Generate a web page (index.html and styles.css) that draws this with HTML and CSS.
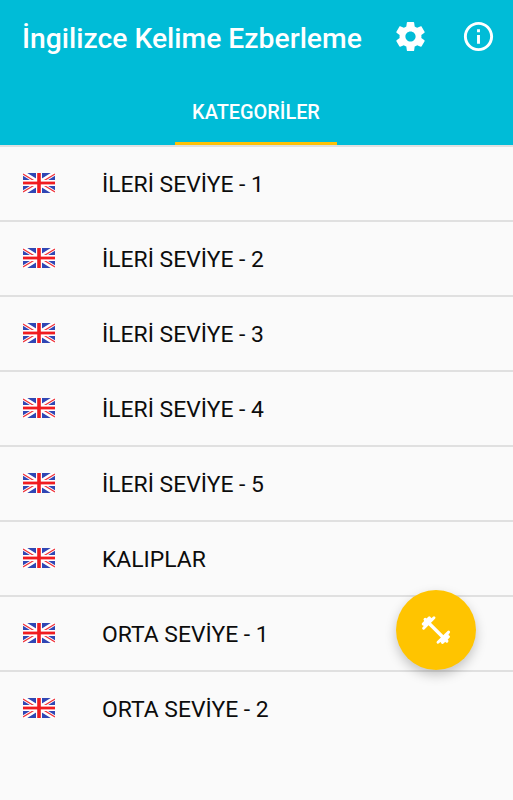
FILE: index.html
```html
<!DOCTYPE html>
<html lang="tr">
<head>
    <meta charset="UTF-8">
    <meta name="viewport" content="width=device-width, initial-scale=1.0">
    <title>İngilizce Kelime Ezberleme</title>
    <link rel="stylesheet" href="styles.css">
</head>
<body>
    <svg width="0" height="0" class="symbols">
        <symbol id="flag" viewBox="0 0 32 20">
            <rect width="32" height="20" fill="#3046b4"/>
            <path d="M0 0L32 20M32 0L0 20" stroke="#fff" stroke-width="4.500"/>
            <path d="M0 1L14 9.500M32 1L18 9.500M0 19L14 10.500M32 19L18 10.500" stroke="#f03038" stroke-width="1.300"/>
            <path d="M16 0V20M0 10H32" stroke="#fff" stroke-width="6"/>
            <path d="M16 0V20" stroke="#f01c20" stroke-width="3.600"/>
            <path d="M0 10H32" stroke="#f01c20" stroke-width="2.800"/>
        </symbol>
    </svg>

    <header class="app-header">
        <div class="toolbar">
            <h1>İngilizce Kelime Ezberleme</h1>
            <button class="icon-button" aria-label="Ayarlar">
                <svg viewBox="0 0 24 24"><path d="M19.43 12.98c.04-.32.07-.64.07-.98s-.03-.66-.07-.98l2.110-1.650c.19-.15.24-.42.12-.64l-2-3.460c-.12-.22-.39-.3-.61-.22l-2.490 1c-.52-.4-1.080-.73-1.690-.98l-.38-2.650C14.460 2.180 14.250 2 14 2h-4c-.25 0-.46.18-.49.42l-.38 2.650c-.61.25-1.170.59-1.690.98l-2.490-1c-.23-.09-.49 0-.61.22l-2 3.460c-.13.22-.07.49.12.64l2.110 1.650c-.04.32-.07.65-.07.98s.03.66.07.98l-2.110 1.650c-.19.15-.24.42-.12.64l2 3.460c.12.22.39.3.61.22l2.490-1c.52.4 1.080.73 1.690.98l.38 2.650c.03.24.24.42.49.42h4c.25 0 .46-.18.49-.42l.38-2.650c.61-.25 1.170-.59 1.690-.98l2.490 1c.23.09.49 0 .61-.22l2-3.460c.12-.22.07-.49-.12-.64l-2.110-1.650zM12 15.500c-1.930 0-3.500-1.570-3.500-3.500s1.570-3.500 3.500-3.500 3.500 1.570 3.500 3.500-1.570 3.500-3.500 3.500z"/></svg>
            </button>
            <button class="icon-button" aria-label="Hakkında">
                <svg viewBox="0 0 24 24"><path d="M11 17h2v-6h-2v6zm1-15C6.480 2 2 6.480 2 12s4.480 10 10 10 10-4.480 10-10S17.520 2 12 2zm0 18c-4.410 0-8-3.590-8-8s3.590-8 8-8 8 3.590 8 8-3.590 8-8 8zM11 9h2V7h-2v2z"/></svg>
            </button>
        </div>
        <nav class="tabs">
            <a class="tab active">KATEGORİLER</a>
        </nav>
    </header>

    <ul class="category-list">
        <li><svg class="flag"><use href="#flag"/></svg><span>İLERİ SEVİYE - 1</span></li>
        <li><svg class="flag"><use href="#flag"/></svg><span>İLERİ SEVİYE - 2</span></li>
        <li><svg class="flag"><use href="#flag"/></svg><span>İLERİ SEVİYE - 3</span></li>
        <li><svg class="flag"><use href="#flag"/></svg><span>İLERİ SEVİYE - 4</span></li>
        <li><svg class="flag"><use href="#flag"/></svg><span>İLERİ SEVİYE - 5</span></li>
        <li><svg class="flag"><use href="#flag"/></svg><span>KALIPLAR</span></li>
        <li><svg class="flag"><use href="#flag"/></svg><span>ORTA SEVİYE - 1</span></li>
        <li><svg class="flag"><use href="#flag"/></svg><span>ORTA SEVİYE - 2</span></li>
    </ul>

    <button class="fab" aria-label="Alıştırma">
        <svg viewBox="0 0 32 32">
            <path d="M5.200 5.500L26.800 27" stroke-width="3.300"/>
            <path d="M3.600 14.300L14 3.800M3.200 10L9.300 3.800M18 28.200L28.600 18.100M22.500 28.500L28.500 22.700" stroke-width="2.900"/>
            <path d="M5 11L10.500 5.300M21.500 26.800L27 21.300" stroke-width="3.500"/>
        </svg>
    </button>
</body>
</html>
```

FILE: styles.css
```css
body {
    margin: 0;
    min-height: 100vh;
    background-color: #fafafa;
    font-family: Roboto, sans-serif;
    overflow: hidden;
}
.symbols {
    position: absolute;
}
.app-header {
    height: 145px;
    background-color: #00bcd7;
    color: white;
    display: flex;
    flex-direction: column;
}
.toolbar {
    height: 73px;
    display: flex;
    align-items: center;
    padding: 0 17px 0 22px;
}
.toolbar h1 {
    flex: 1;
    min-width: 0;
    margin: 0;
    padding-top: 3px;
    font-size: 28.300px;
    font-weight: 500;
    white-space: nowrap;
}
.icon-button {
    flex: none;
    width: 35px;
    height: 35px;
    margin-left: 33.500px;
    padding: 0;
    border: none;
    background: none;
}
.icon-button svg {
    display: block;
    width: 35px;
    height: 35px;
    fill: white;
}
.tabs {
    flex: 1;
    display: flex;
    justify-content: center;
    padding-right: 1px;
}
.tab {
    box-sizing: border-box;
    width: 162px;
    border-bottom: 3px solid #ffc107;
    padding-top: 9px;
    display: flex;
    align-items: center;
    justify-content: center;
    font-size: 19.900px;
    font-weight: 500;
}
.category-list {
    list-style: none;
    margin: 0;
    padding: 0;
    border-top: 2px solid #e0e0e0;
}
.category-list li {
    box-sizing: border-box;
    height: 75px;
    padding-left: 23.400px;
    display: flex;
    align-items: center;
    border-bottom: 2px solid #e0e0e0;
    font-size: 22.900px;
    color: #0c0c0c;
}
.category-list li:last-child {
    border-bottom-color: transparent;
}
.category-list span {
    padding-top: 2px;
}
.flag {
    width: 32px;
    height: 20px;
    margin: 0 46.600px 1px 0;
}
.fab {
    position: fixed;
    right: 37px;
    bottom: 130px;
    width: 80px;
    height: 80px;
    padding: 0;
    border: none;
    border-radius: 50%;
    background-color: #ffc400;
    box-shadow: 0 5px 12px rgba(0, 0, 0, 0.22);
    display: flex;
    align-items: center;
    justify-content: center;
}
.fab svg {
    width: 32px;
    height: 32px;
    fill: none;
    stroke: white;
    stroke-linecap: round;
}
```
